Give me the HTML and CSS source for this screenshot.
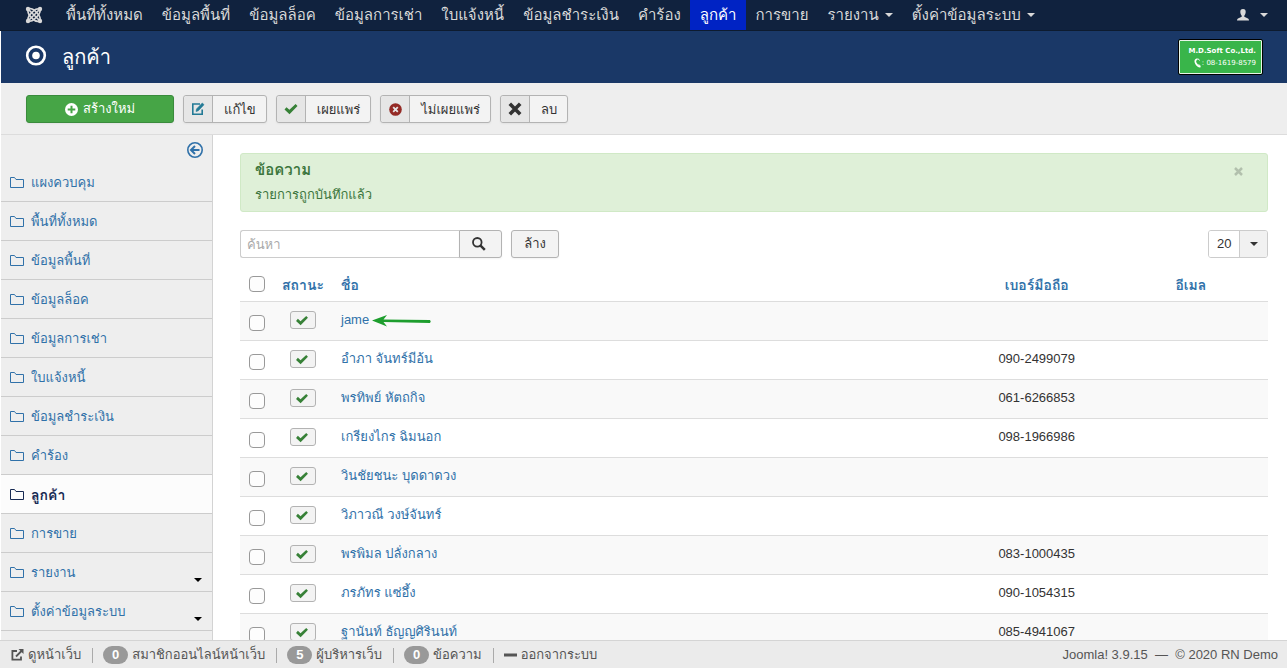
FILE: index.html
```html
<!DOCTYPE html>
<html lang="th">
<head>
<meta charset="utf-8">
<meta name="viewport" content="width=device-width, initial-scale=1">
<title>ลูกค้า</title>
<link rel="stylesheet" href="styles.css">
</head>
<body>
<svg class="sprite" aria-hidden="true">
  <symbol id="folder" viewBox="0 0 14 12"><path d="M.5 10.500V.5H4.500L6 2.500H13.500V10.500Z" fill="none" stroke="currentColor"/></symbol>
  <symbol id="check" viewBox="0 0 14 12"><path d="M.5 6.500 2.500 4.200 5.400 6.800 11.600 1 13.500 2.900 5.500 11.200Z" fill="currentColor"/></symbol>
</svg>
<div class="app">
  <nav class="navbar">
    <a class="brand" href="#" aria-label="Joomla"><svg width="18" height="18" viewBox="0 0 18 18" fill="none" stroke="currentColor" stroke-width="1.700"><path d="M3 3 15 15M15 3 3 15"/><path d="M3 3C2.500 6.500 3.500 8.500 5.500 10.500L9 14C11 15.500 13 15.600 15 15C15.600 12 14.500 9.500 12.500 7.500L9 4C7 2.500 5 2.400 3 3"/><path d="M15 3C12 2.400 10.500 3 9 4.500L5.500 8C3.500 10 2.500 12 3 15C6 15.600 7.500 15 9 13.500L12.500 10C14.500 8 15.500 6 15 3"/><g fill="currentColor" stroke="none"><circle cx="3" cy="3" r="2.200"/><circle cx="15" cy="3" r="2.200"/><circle cx="3" cy="15" r="2.200"/><circle cx="15" cy="15" r="2.200"/></g></svg></a>
    <ul class="menu">
      <li><a href="#">พื้นที่ทั้งหมด</a></li>
      <li><a href="#">ข้อมูลพื้นที่</a></li>
      <li><a href="#">ข้อมูลล็อค</a></li>
      <li><a href="#">ข้อมูลการเช่า</a></li>
      <li><a href="#">ใบแจ้งหนี้</a></li>
      <li><a href="#">ข้อมูลชำระเงิน</a></li>
      <li><a href="#">คำร้อง</a></li>
      <li><a class="current" href="#">ลูกค้า</a></li>
      <li><a href="#">การขาย</a></li>
      <li><a href="#">รายงาน<span class="caret"></span></a></li>
      <li><a href="#">ตั้งค่าข้อมูลระบบ<span class="caret"></span></a></li>
    </ul>
    <a class="user" href="#" aria-label="User"><svg width="12" height="12" viewBox="0 0 12 12" fill="currentColor"><path d="M6 0C8 0 8.800 1.200 8.700 3 8.600 4.800 7.900 6 7.300 6.700V7.800L11 9.400Q12 10 12 11.500H0Q0 10 1 9.400L4.700 7.800V6.700C4.100 6 3.400 4.800 3.300 3 3.200 1.200 4 0 6 0Z"/></svg><span class="caret"></span></a>
  </nav>
  <header class="header">
    <svg width="22" height="24" viewBox="0 0 22 24"><circle cx="11" cy="10.500" r="8.800" fill="none" stroke="#fff" stroke-width="2.600"/><circle cx="11" cy="10.500" r="3.800" fill="#fff"/></svg>
    <h1>ลูกค้า</h1>
    <div class="logo"><strong>M.D.Soft Co.,Ltd.</strong><span><svg width="7" height="10" viewBox="0 0 7 10" fill="none" stroke="#fff" stroke-width="1.700"><path d="M3.500 1Q0 2 2 5.500 4 9 6.500 8.500"/><path d="M4 .5 5.500 2.500M4.500 6.500 6.500 8" stroke-width="1"/></svg>: 08-1619-8579</span></div>
  </header>
  <div class="toolbar">
    <button class="btn new"><svg width="13" height="13" viewBox="0 0 13 13"><circle cx="6.500" cy="6.500" r="6.500" fill="#fff"/><path d="M6.500 2.700V10.300M2.700 6.500H10.300" stroke="#46a546" stroke-width="2"/></svg>สร้างใหม่</button>
    <button class="btn tool"><span class="cell"><svg width="14" height="14" viewBox="0 0 14 14" fill="none" stroke="#237a96" stroke-width="1.600"><path d="M9 2H1.800V12.200H11.200V7.500"/><path d="M5 9.500 5.500 7 11.300 1 13 2.700 7.300 8.800Z" fill="#237a96" stroke-width=".6"/></svg></span><span class="label">แก้ไข</span></button>
    <button class="btn tool"><span class="cell green"><svg width="14" height="12"><use href="#check"/></svg></span><span class="label">เผยแพร่</span></button>
    <button class="btn tool"><span class="cell"><svg width="13" height="13" viewBox="0 0 13 13"><circle cx="6.500" cy="6.500" r="6.300" fill="#942a25"/><path d="M4.200 4.200 8.800 8.800M8.800 4.200 4.200 8.800" stroke="#e6e6e6" stroke-width="1.800"/></svg></span><span class="label">ไม่เผยแพร่</span></button>
    <button class="btn tool"><span class="cell"><svg width="14" height="14" viewBox="0 0 14 14"><path d="M1.800 1.800 12.200 12.200M12.200 1.800 1.800 12.200" stroke="#333" stroke-width="3.600"/></svg></span><span class="label">ลบ</span></button>
  </div>
  <div class="body">
    <aside class="sidebar">
      <button class="toggle" aria-label="Toggle sidebar"><svg width="16" height="16" viewBox="0 0 16 16" fill="none" stroke="currentColor"><circle cx="8" cy="8" r="7.200" stroke-width="1.600"/><path d="M12.500 8H4.500M8 4 4 8 8 12" stroke-width="2"/></svg></button>
      <ul class="side">
        <li><a href="#"><svg><use href="#folder"/></svg>แผงควบคุม</a></li>
        <li><a href="#"><svg><use href="#folder"/></svg>พื้นที่ทั้งหมด</a></li>
        <li><a href="#"><svg><use href="#folder"/></svg>ข้อมูลพื้นที่</a></li>
        <li><a href="#"><svg><use href="#folder"/></svg>ข้อมูลล็อค</a></li>
        <li><a href="#"><svg><use href="#folder"/></svg>ข้อมูลการเช่า</a></li>
        <li><a href="#"><svg><use href="#folder"/></svg>ใบแจ้งหนี้</a></li>
        <li><a href="#"><svg><use href="#folder"/></svg>ข้อมูลชำระเงิน</a></li>
        <li><a href="#"><svg><use href="#folder"/></svg>คำร้อง</a></li>
        <li><a class="active" href="#"><svg><use href="#folder"/></svg>ลูกค้า</a></li>
        <li><a href="#"><svg><use href="#folder"/></svg>การขาย</a></li>
        <li><a href="#"><svg><use href="#folder"/></svg>รายงาน<span class="caret"></span></a></li>
        <li><a href="#"><svg><use href="#folder"/></svg>ตั้งค่าข้อมูลระบบ<span class="caret"></span></a></li>
      </ul>
    </aside>
    <main class="main">
      <section class="alert">
        <div><h2>ข้อความ</h2><p>รายการถูกบันทึกแล้ว</p></div>
        <button aria-label="Close"><svg width="9" height="9" viewBox="0 0 9 9"><path d="M1 1 8 8M8 1 1 8" stroke="currentColor" stroke-width="2.500"/></svg></button>
      </section>
      <form class="filters">
        <div class="search">
          <input type="text" placeholder="ค้นหา" aria-label="ค้นหา">
          <button class="btn" type="button" aria-label="ค้นหา"><svg width="14" height="14" viewBox="0 0 14 14" fill="none" stroke="#333"><circle cx="5.300" cy="5.300" r="4.300" stroke-width="1.800"/><path d="M8.300 8.300 12.800 12.800" stroke-width="2.500"/></svg></button>
        </div>
        <button class="btn clear" type="button">ล้าง</button>
        <div class="limit"><select aria-label="จำนวนแถว"><option>20</option></select><span class="drop"><span class="caret"></span></span></div>
      </form>
      <table class="list">
        <colgroup><col class="c-check"><col class="c-state"><col><col class="c-info"><col class="c-info"></colgroup>
        <thead><tr><th class="mid"><input type="checkbox" aria-label="เลือกทั้งหมด"></th><th class="mid"><a href="#">สถานะ</a></th><th><a href="#">ชื่อ</a></th><th class="mid"><a href="#">เบอร์มือถือ</a></th><th class="mid"><a href="#">อีเมล</a></th></tr></thead>
        <tbody>
          <tr><td class="mid"><input type="checkbox" aria-label="jame"></td><td class="mid"><button class="state" aria-label="เผยแพร่"><svg><use href="#check"/></svg></button></td><td><a href="#">jame</a><svg class="arrow" width="60" height="12" viewBox="0 0 60 12"><path d="M0 5.500 15 0 11.500 4.500 58 5Q59.500 6.500 58 8L11.500 7 15 11.500Z" fill="#1e9e2e"/></svg></td><td class="mid"></td><td></td></tr>
          <tr><td class="mid"><input type="checkbox" aria-label="อำภา จันทร์มีอ้น"></td><td class="mid"><button class="state" aria-label="เผยแพร่"><svg><use href="#check"/></svg></button></td><td><a href="#">อำภา จันทร์มีอ้น</a></td><td class="mid">090-2499079</td><td></td></tr>
          <tr><td class="mid"><input type="checkbox" aria-label="พรทิพย์ หัตถกิจ"></td><td class="mid"><button class="state" aria-label="เผยแพร่"><svg><use href="#check"/></svg></button></td><td><a href="#">พรทิพย์ หัตถกิจ</a></td><td class="mid">061-6266853</td><td></td></tr>
          <tr><td class="mid"><input type="checkbox" aria-label="เกรียงไกร ฉิมนอก"></td><td class="mid"><button class="state" aria-label="เผยแพร่"><svg><use href="#check"/></svg></button></td><td><a href="#">เกรียงไกร ฉิมนอก</a></td><td class="mid">098-1966986</td><td></td></tr>
          <tr><td class="mid"><input type="checkbox" aria-label="วินชัยชนะ บุดดาดวง"></td><td class="mid"><button class="state" aria-label="เผยแพร่"><svg><use href="#check"/></svg></button></td><td><a href="#">วินชัยชนะ บุดดาดวง</a></td><td class="mid"></td><td></td></tr>
          <tr><td class="mid"><input type="checkbox" aria-label="วิภาวณี วงษ์จันทร์"></td><td class="mid"><button class="state" aria-label="เผยแพร่"><svg><use href="#check"/></svg></button></td><td><a href="#">วิภาวณี วงษ์จันทร์</a></td><td class="mid"></td><td></td></tr>
          <tr><td class="mid"><input type="checkbox" aria-label="พรพิมล ปลั่งกลาง"></td><td class="mid"><button class="state" aria-label="เผยแพร่"><svg><use href="#check"/></svg></button></td><td><a href="#">พรพิมล ปลั่งกลาง</a></td><td class="mid">083-1000435</td><td></td></tr>
          <tr><td class="mid"><input type="checkbox" aria-label="ภรภัทร แซ่อึ้ง"></td><td class="mid"><button class="state" aria-label="เผยแพร่"><svg><use href="#check"/></svg></button></td><td><a href="#">ภรภัทร แซ่อึ้ง</a></td><td class="mid">090-1054315</td><td></td></tr>
          <tr><td class="mid"><input type="checkbox" aria-label="ฐานันท์ ธัญญศิรินนท์"></td><td class="mid"><button class="state" aria-label="เผยแพร่"><svg><use href="#check"/></svg></button></td><td><a href="#">ฐานันท์ ธัญญศิรินนท์</a></td><td class="mid">085-4941067</td><td></td></tr>
        </tbody>
      </table>
    </main>
  </div>
  <footer class="status">
    <a class="item" href="#"><svg width="13" height="12" viewBox="0 0 13 12" fill="none" stroke="currentColor" stroke-width="1.800"><path d="M6 2H1.400V10.600H10V7.500"/><path d="M5 7.500 11 1.500"/><path d="M7.500 0H12.500V5Z" fill="currentColor" stroke="none"/></svg>ดูหน้าเว็บ</a>
    <span class="item"><span class="badge">0</span>สมาชิกออนไลน์หน้าเว็บ</span>
    <span class="item"><span class="badge">5</span>ผู้บริหารเว็บ</span>
    <a class="item" href="#"><span class="badge">0</span>ข้อความ</a>
    <a class="item" href="#"><svg width="13" height="12" viewBox="0 0 13 12"><path d="M0 4.500H13V7.500H0Z" fill="currentColor"/></svg>ออกจากระบบ</a>
    <span class="copy">Joomla! 3.9.15&nbsp; —&nbsp; © 2020 RN Demo</span>
  </footer>
</div>
</body>
</html>
```
FILE: styles.css
```css
* { box-sizing: border-box; }
body {
  margin: 0;
  font: 13px/18px "Liberation Sans", "Loma", "Noto Sans Thai", sans-serif;
  color: #333;
  background: #fff;
}
a { color: #3071a9; text-decoration: none; }
button, input, select { font: inherit; color: inherit; margin: 0; }
ul, h1, h2, p { margin: 0; padding: 0; list-style: none; }
svg { flex: none; display: block; }
.sprite { position: absolute; width: 0; height: 0; }
.app { display: flex; flex-direction: column; height: 100vh; overflow: hidden; }
.caret { flex: none; border: 4px solid transparent; border-top-color: currentColor; border-bottom: 0; }

.navbar {
  display: flex;
  flex: none;
  height: 31px;
  padding: 0 19px 0 25px;
  background: #10223e;
  border-bottom: 1px solid #0d1b2f;
}
.navbar a { display: flex; align-items: center; height: 30px; color: #d9d9d9; }
.brand { margin-right: 13px; }
.menu { display: flex; flex: 1; font-size: 15px; white-space: nowrap; }
.menu a { padding: 0 9px 0 10px; }
.menu .caret { margin-left: 6px; }
.menu a.current { background: #0023c4; color: #fff; }
.user .caret { margin-left: 11px; }

.header {
  display: flex;
  flex: none;
  align-items: center;
  height: 52px;
  margin-left: 1px;
  padding: 0 24px;
  background: #1a3867;
  color: #fff;
}
.header h1 { margin-left: 15px; font-size: 20px; font-weight: 400; line-height: 32px; }
.logo {
  display: flex;
  flex-direction: column;
  align-items: flex-end;
  justify-content: center;
  gap: 2px;
  width: 85px;
  height: 36px;
  margin-left: auto;
  padding-right: 6px;
  border: 1px solid #000;
  border-radius: 2px;
  background: #39b54a;
  box-shadow: inset 0 0 0 1px #e8f5e8;
  font: 7px/10px "DejaVu Sans", sans-serif;
  white-space: nowrap;
}
.logo strong { font-size: 7px; }
.logo span { display: flex; gap: 1px; }

.toolbar {
  display: flex;
  flex: none;
  gap: 9px;
  height: 52px;
  margin-left: 1px;
  padding: 12px 25px;
  background: #eee;
  border-bottom: 1px solid #dcdcdc;
}
.btn {
  display: flex;
  align-items: center;
  justify-content: center;
  height: 28px;
  padding: 0;
  border: 1px solid #b3b3b3;
  border-radius: 3px;
  background: #f3f3f3;
  box-shadow: 0 1px 2px rgba(0, 0, 0, .05);
  white-space: nowrap;
}
.new { gap: 5px; width: 148px; background: #46a546; border-color: #3a8b3c; color: #fff; }
.cell {
  display: flex;
  align-items: center;
  justify-content: center;
  width: 29px;
  height: 26px;
  background: #e6e6e6;
  border-right: 1px solid #b3b3b3;
  border-radius: 3px 0 0 3px;
}
.green { color: #378137; }
.label { padding: 1px 10px 0 11px; }

.body { display: flex; flex: 1; min-height: 0; margin-left: 1px; overflow: hidden; }
.sidebar { flex: none; width: 212px; background: #eee; border-right: 1px solid #d3d3d3; }
.toggle { display: block; height: 28px; margin-left: auto; padding: 2px 9px 0 0; border: 0; background: none; color: #3071a9; }
.side a {
  display: flex;
  align-items: center;
  height: 39px;
  padding: 1px 10px 0 9px;
  border-bottom: 1px solid #ccc;
}
.side svg { width: 14px; height: 12px; margin-right: 7px; }
.side a.active { background: #fcfcfc; color: #172a53; font-size: 14px; font-weight: 700; }
.side .caret { margin: 14px 0 0 auto; color: #000; }

.main { flex: 1; min-width: 0; padding: 18px 19px 0 27px; }
.alert {
  display: flex;
  justify-content: space-between;
  align-items: flex-start;
  padding: 6px 24px 6px 14px;
  border: 1px solid #d0e9c6;
  border-radius: 3px;
  background: #dff0d8;
  color: #3c763d;
}
.alert h2 { font-size: 15px; line-height: 20px; margin-bottom: 5px; }
.alert p { line-height: 20px; }
.alert button { padding: 7px 0 0; border: 0; background: none; color: #b2c0ad; }
.filters { display: flex; gap: 9px; margin: 18px 0 9px; }
.search { display: flex; width: 262px; }
.search input {
  flex: 1;
  min-width: 0;
  height: 28px;
  padding: 4px 6px;
  border: 1px solid #ccc;
  border-right: 0;
  border-radius: 3px 0 0 3px;
}
.search input::placeholder { color: #aaa; }
.search .btn { width: 43px; padding-right: 4px; border-radius: 0 3px 3px 0; }
.clear { width: 48px; }
.limit { display: flex; width: 60px; height: 28px; margin-left: auto; border: 1px solid #ccc; border-radius: 3px; overflow: hidden; }
.limit select { flex: 1; min-width: 0; appearance: none; border: 0; padding: 0 0 0 8px; background: #fff; }
.drop { display: flex; align-items: center; justify-content: center; width: 28px; background: #f1f1f1; border-left: 1px solid #ccc; }

.list { width: 100%; border-collapse: collapse; table-layout: fixed; }
.c-check { width: 34px; }
.c-state { width: 58px; }
.c-info { width: 15%; }
.list th, .list td { padding: 9px 9px 7px; text-align: left; vertical-align: top; line-height: 18px; white-space: nowrap; }
.list th { height: 34px; font-size: 14px; }
.list td { height: 39px; border-top: 1px solid #ddd; }
.list .mid { text-align: center; padding-left: 0; padding-right: 0; }
.list tbody tr:nth-child(odd) { background: #f9f9f9; }
.list input {
  appearance: none;
  display: block;
  width: 16px;
  height: 16px;
  margin: 0 auto;
  border: 1px solid #999;
  border-radius: 4px;
  background: #fdfdfd;
}
.list td input { margin-top: 4px; }
.state {
  display: flex;
  align-items: center;
  width: 26px;
  height: 18px;
  margin: 0 auto;
  padding: 0 0 0 4px;
  border: 1px solid #b3b3b3;
  border-radius: 3px;
  background: #f3f3f3;
  color: #378137;
}
.state svg { width: 14px; height: 11px; }
.arrow { display: inline-block; margin-left: 3px; vertical-align: -3px; }

.status {
  display: flex;
  flex: none;
  align-items: center;
  height: 28px;
  padding: 1px 9px 0 11px;
  background: #ebebeb;
  border-top: 1px solid #d4d4d4;
  color: #555;
  white-space: nowrap;
}
.item { display: flex; align-items: center; gap: 4px; color: #555; }
.item + .item { margin-left: 11px; padding-left: 10px; border-left: 1px solid #aaa; height: 15px; }
.badge {
  width: 25px;
  height: 18px;
  border-radius: 9px;
  background: #999;
  color: #fff;
  font-weight: 700;
  text-align: center;
}
.copy { margin-left: auto; }
```
